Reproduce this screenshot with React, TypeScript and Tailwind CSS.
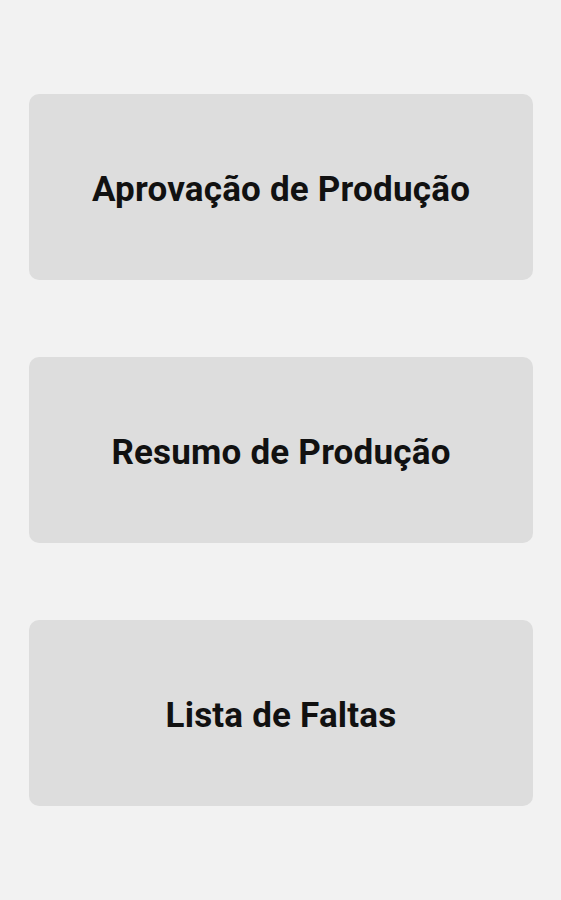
export default function App() {
  const items = ["Aprovação de Produção", "Resumo de Produção", "Lista de Faltas"];
  return (
    <div className="min-h-[900px] w-full bg-[#f2f2f2] pt-[94px] pl-[29px] pr-[28px] font-['Roboto',sans-serif]">
      <div className="flex flex-col gap-[77px]">
        {items.map((label) => (
          <button
            key={label}
            className="h-[186px] w-full rounded-[10px] bg-[#dddddd] pt-[6px] text-[35px] font-bold tracking-[0.2px] text-[#111111] flex items-center justify-center"
          >
            {label}
          </button>
        ))}
      </div>
    </div>
  );
}
